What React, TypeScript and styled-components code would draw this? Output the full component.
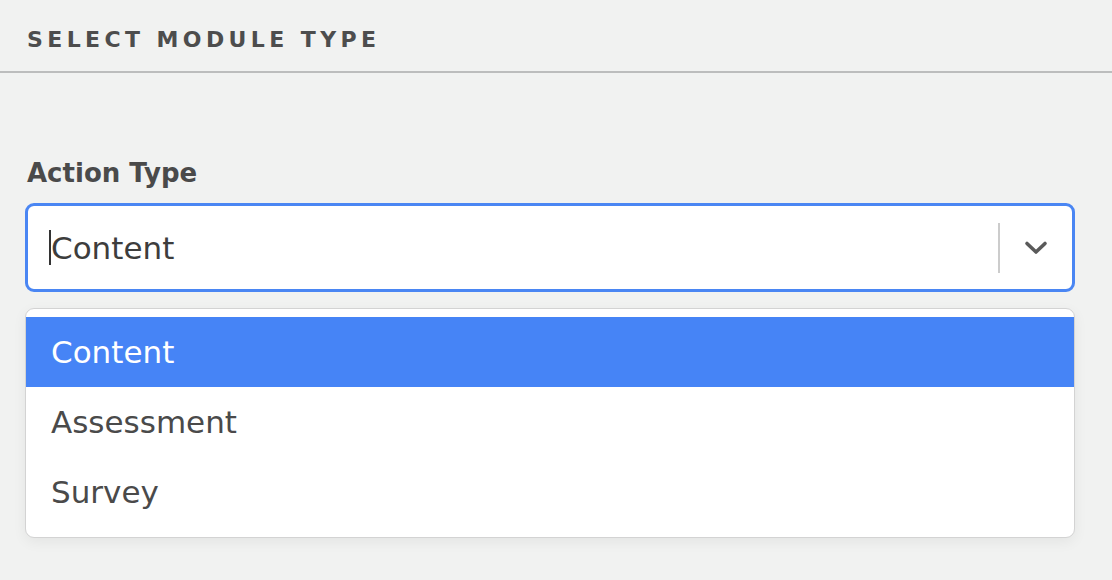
import React from "react";
import styled, { createGlobalStyle } from "styled-components";

const Global = createGlobalStyle`
  html, body { margin: 0; padding: 0; background: #f1f2f1; }
  body { font-family: "DejaVu Sans", "Noto Sans", sans-serif; color: #4a4a4a; }
`;

const Page = styled.div`
  width: 1112px;
  height: 580px;
  background: #f1f2f1;
  overflow: hidden;
`;

const Header = styled.div`
  height: 73px;
  box-sizing: border-box;
  padding: 27px 27px 0;
  border-bottom: 2px solid #bcbdbd;
`;

const Title = styled.h1`
  margin: 0;
  font-size: 22px;
  line-height: 26px;
  font-weight: 700;
  letter-spacing: 4.4px;
  color: #4d4d4d;
`;

const Body = styled.div`
  padding: 84px 37px 0 25px;
  display: flex;
  flex-direction: column;
`;

const Label = styled.label`
  font-size: 26px;
  font-weight: 700;
  line-height: 32px;
  margin: 0 0 14px 2px;
  color: #4a4a4a;
`;

const Control = styled.div`
  height: 89px;
  box-sizing: border-box;
  border: 3px solid #4a86f3;
  border-radius: 9px;
  background: #fff;
  display: flex;
  align-items: center;
`;

const Value = styled.div`
  flex: 1;
  padding-left: 21px;
  display: flex;
  align-items: center;
  font-size: 31px;
  color: #3d3d3d;
`;

const Caret = styled.span`
  display: inline-block;
  width: 2px;
  height: 35px;
  background: #333;
`;

const Separator = styled.span`
  width: 2px;
  height: 50px;
  background: #cccccc;
  align-self: center;
`;

const Indicator = styled.div`
  width: 72px;
  display: flex;
  justify-content: center;
  align-items: center;
`;

const Menu = styled.div`
  margin-top: 16px;
  background: #fff;
  border: 1px solid #d3d3d3;
  border-radius: 9px;
  box-shadow: 0 4px 14px rgba(0, 0, 0, 0.06);
  padding: 8px 0 10px;
  overflow: hidden;
`;

const Option = styled.div<{ $selected?: boolean }>`
  height: 70px;
  display: flex;
  align-items: center;
  padding-left: 25px;
  font-size: 31px;
  background: ${(p) => (p.$selected ? "#4684f6" : "#fff")};
  color: ${(p) => (p.$selected ? "#fff" : "#4a4a4a")};
`;

export default function App() {
  const options = ["Content", "Assessment", "Survey"];
  return (
    <Page>
      <Global />
      <Header>
        <Title>SELECT MODULE TYPE</Title>
      </Header>
      <Body>
        <Label>Action Type</Label>
        <Control>
          <Value>
            <Caret />
            Content
          </Value>
          <Separator />
          <Indicator>
            <svg width="24" height="16" viewBox="0 0 24 16" fill="none">
              <path d="M3 3.5 L12 12 L21 3.5" stroke="#5a5a5a" strokeWidth="3.6" strokeLinecap="round" strokeLinejoin="round" />
            </svg>
          </Indicator>
        </Control>
        <Menu>
          {options.map((o, i) => (
            <Option key={o} $selected={i === 0}>
              {o}
            </Option>
          ))}
        </Menu>
      </Body>
    </Page>
  );
}
